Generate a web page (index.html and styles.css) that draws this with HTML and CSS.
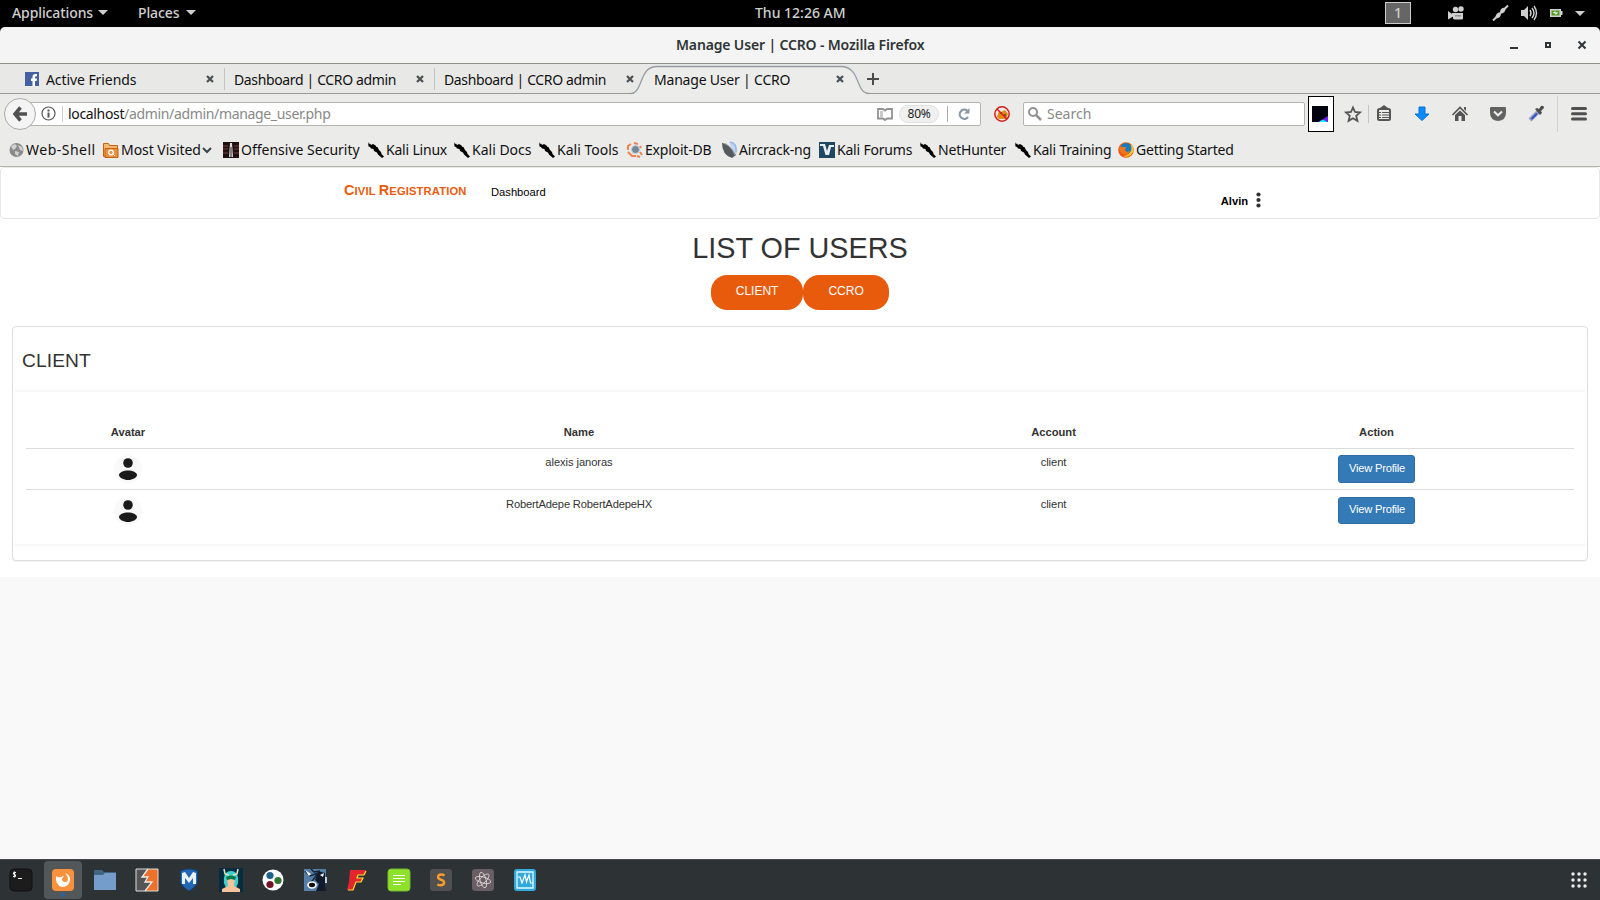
FILE: index.html
```html
<!DOCTYPE html>
<html lang="en">
<head>
<meta charset="utf-8">
<title>Manage User | CCRO</title>
<link rel="stylesheet" href="styles.css">
</head>
<body>
<svg class="defs" width="0" height="0">
  <symbol id="kali" viewBox="0 0 16 16"><path d="M0 0l1 2 1-.5 1 1.500 2-1 2.500 1.500 1 1.500L9.500 5l1.500 3 2 2 .5 2L16 14.500 14 16l-4-3.500-1-2L6 9l-.5-2-2.500-.5L2 5 .5 4.500z"/></symbol>
  <symbol id="caret" viewBox="0 0 10 5"><path d="M0 0h10L5 5z" fill="#d0d0d0"/></symbol>
  <symbol id="close" viewBox="0 0 8 8"><path d="M1 1l6 6M7 1L1 7" stroke="#4b5356" stroke-width="2.300"/></symbol>
  <symbol id="person" viewBox="0 0 28 28"><circle cx="14" cy="14" r="14" fill="#f9f9f9"/><circle cx="14" cy="8" r="4.800" fill="#1a1a1a"/><path d="M5 20c0-2.500 4.500-4.500 9-4.500s9 2 9 4.500-4.500 5-9 5-9-2.500-9-5z" fill="#1a1a1a"/></symbol>
</svg>
<header class="topbar">
  <span class="apps">Applications</span><svg width="10" height="5"><use href="#caret"/></svg>
  <span class="places">Places</span><svg width="10" height="5"><use href="#caret"/></svg>
  <span class="clock">Thu 12:26 AM</span>
  <span class="workspace">1</span>
  <svg class="tray" width="140" height="16" fill="#d0d0d0">
    <path d="M0 6l4 3v-1h11v5.500q0 1-1 1H6l-1-1v-2l-5 3z"/><circle cx="7.500" cy="4.500" r="2.700"/><circle cx="13" cy="4" r="2.700"/><path d="M7 10h6v1.500H7z" fill="#000" opacity=".3"/>
    <path d="M45 15.500l5-5M55 5.500l5-5" stroke="#d0d0d0" stroke-width="2"/><path d="M48 13c-1-3 1-5.500 4-5.500l1 1c0 3-2 5.500-5 4.500zM57 3c1 3-1 5.500-4 5.500l-1-1c0-3 2-5.500 5-4.500z"/>
    <path d="M73 5h3l4-4v14l-4-4h-3z"/><path d="M82 5q2 3 0 6M84 3q4 5 0 10M86 1q5 7 0 14" fill="none" stroke="#d0d0d0" stroke-width="1.400"/>
    <path d="M102 4h11v2h1.500v4H113v2h-11z"/><path d="M103.500 5.500h8v5h-8z" fill="#4f9a1e"/><path d="M104.500 8l3-2v1.500h3l-3 2.500V8.500z" fill="#fff"/>
    <path d="M127 6h10l-5 5z"/>
  </svg>
</header>
<div class="titlebar">
  <span class="window-title">Manage User | CCRO - Mozilla Firefox</span>
  <svg class="window-buttons" width="76" height="8"><path d="M0 6h8v2H0z" fill="#2e3436"/><path d="M36 2h4v4h-4z" fill="none" stroke="#2e3436" stroke-width="2"/><path d="M68.500 .5l7 7M75.500 .5l-7 7" stroke="#2e3436" stroke-width="2"/></svg>
</div>
<nav class="tabs">
  <div class="tab first"><svg width="14" height="14"><path d="M0 0h14v14H0z" fill="#4460a0"/><path d="M7.500 14V9H6V6.500h1.500V5q0-3 3-3H12v2.300h-1q-1 0-1 1v1.200h2L11.700 9H10v5z" fill="#fff"/></svg><span>Active Friends</span><svg class="x" width="8" height="8"><use href="#close"/></svg></div>
  <div class="tab"><span>Dashboard | CCRO admin</span><svg class="x" width="8" height="8"><use href="#close"/></svg></div>
  <div class="tab"><span>Dashboard | CCRO admin</span><svg class="x" width="8" height="8"><use href="#close"/></svg></div>
  <div class="tab active"><svg class="shape" width="240" height="31"><path d="M0 29.500C14 29.500 10 2.500 27 2.500H213C232 2.500 226 29.500 240 29.500V31H0z" fill="#ececeb"/><path d="M0 28.500C14 28.500 8 1.500 27 1.500H211C231 1.500 225 28.500 239 28.500" fill="none" stroke="#989da3" stroke-width="1.300"/></svg><span>Manage User | CCRO</span><svg class="x" width="8" height="8"><use href="#close"/></svg></div>
  <svg class="plus" width="12" height="12"><path d="M6 0v12M0 6h12" stroke="#4b4b4b" stroke-width="2"/></svg>
</nav>
<div class="navigation">
  <div class="back"><svg width="14" height="14"><path d="M7.500 0.500L2 7l5.500 6.500M2 7h12" fill="none" stroke="#505050" stroke-width="3.500"/></svg></div>
  <div class="urlbar">
    <svg width="15" height="15"><circle cx="7.500" cy="7.500" r="6.500" fill="none" stroke="#555" stroke-width="1.200"/><path d="M6.500 3.500h2v2h-2zM6.500 6.500h2v5h-2z" fill="#555"/></svg>
    <i class="rule"></i><span class="address"><b>localhost</b>/admin/admin/manage_user.php</span>
    <svg class="reader" width="16" height="12" fill="none" stroke="#929292" stroke-width="1.800"><path d="M1 1h5l2 1.500L10 1h5v9.500h-5L8 12l-2-1.500H1z"/><path d="M3 4h3M3 6h3M3 8h3" stroke-width="1"/></svg>
    <span class="zoom">80%</span><i class="rule dark"></i>
    <svg class="reload" width="12" height="12"><path d="M10 9A4.600 4.600 0 1 1 9 2.500" fill="none" stroke="#8797a6" stroke-width="2.200"/><path d="M11.500 0v5.500H6z" fill="#8797a6"/></svg>
  </div>
  <svg class="blocked" width="16" height="16"><circle cx="8" cy="8" r="7.200" fill="#eee8e4" stroke="#d2201c" stroke-width="1.500"/><path d="M3 11l2-6 2 1 4-2 3 4-2 5H5z" fill="#e68a13"/><path d="M6 7h2M10 9h2" stroke="#653b15" stroke-width="1.500"/><path d="M3 3l10 10" stroke="#d2201c" stroke-width="1.500"/></svg>
  <div class="search"><svg width="14" height="14" fill="none" stroke="#929292"><circle cx="5" cy="5" r="4" stroke-width="2"/><path d="M8 8l5 5" stroke-width="2.500"/></svg><span>Search</span></div>
  <div class="addon"><svg width="16" height="16"><path d="M0 0h16v16H0z" fill="#03020f"/><path d="M6 16l10-6v6z" fill="#6d21f0"/><path d="M7 16q4-4 8 0z" fill="#0ff"/></svg></div>
  <svg class="tools" width="244" height="36">
    <path d="M9 11.500l2 4.500 5 .5-3.800 3.300 1.200 5-4.400-2.600-4.400 2.600 1.200-5L2 16.500l5-.5z" fill="none" stroke="#555" stroke-width="1.800"/>
    <path d="M24.500 9v18" stroke="#c5c5c5"/>
    <rect x="34" y="13" width="12" height="11" rx="1.500" fill="none" stroke="#555" stroke-width="2"/><path d="M36 12l4-3 4 3z" fill="#555"/><path d="M35 16.500h2M38 16.500h7M35 19h2M38 19h7M35 21.500h2M38 21.500h7" stroke="#555" stroke-width="1.200"/>
    <path d="M75 11h6v7h4l-7 6.500-7-6.500h4z" fill="#0c8bfa" stroke="#0870d0"/>
    <path d="M108.500 19l7.500-7.500 7.500 7.500" fill="none" stroke="#555" stroke-width="1.700"/><path d="M111 19l5-4.500 5 4.500v6h-3.500v-5h-3v5H111zM120 11h2v4l-2-2z" fill="#555"/>
    <path d="M146 12q0-1 1-1h14q1 0 1 1v5q0 7-8 8-8-1-8-8z" fill="#626262"/><path d="M150 15.500l4 3.800 4-3.800" fill="none" stroke="#eee" stroke-width="2"/>
    <path d="M186 24l8-8" stroke="#96a0bd" stroke-width="4"/><path d="M187.500 23l5.500-5.500" stroke="#3254cc" stroke-width="2"/><path d="M191 13l2-1 2 1 2-3q3-1 3 2l-3 3 1 2-2 2z" fill="#4d4d50"/>
    <path d="M213.500 0v36" stroke="#d2d2d2"/><path d="M228.500 12.500h13M228.500 17.700h13M228.500 23h13" stroke="#505050" stroke-width="3" stroke-linecap="round"/>
  </svg>
</div>
<div class="bookmarks">
  <a><svg width="15" height="16"><circle cx="7.500" cy="8" r="7" fill="#8b8b8b"/><path d="M2 4l4-2 2 2-2 3-2 1zM9 3l4 2 1 4-3-1zM6 9l4 1-1 4-3-2z" fill="#d2d2d2"/></svg>Web-Shell</a>
  <a><svg width="16" height="16"><path d="M.5 1.500h5l1 2h8v11H.5z" fill="#f3b673" stroke="#c7620d"/><path d="M2 6.500h13v9H2z" fill="#e99043" stroke="#c7620d"/><circle cx="8" cy="10.500" r="2.300" fill="none" stroke="#fff" stroke-width="1.300"/><path d="M10 12l2 2" stroke="#fff"/></svg>Most Visited<svg class="chevron" width="10" height="7"><path d="M0 1l4 4 4-4" fill="none" stroke="#3c4448" stroke-width="2"/></svg></a>
  <a><svg width="16" height="16"><path d="M0 0h16v16H0z" fill="#20100f"/><path d="M0 4h5M11 4h5M0 7h5M11 7h5M0 11h5M11 11h5" stroke="#703f3b"/><path d="M7 1h2l1 14H6z" fill="#ddd"/><path d="M8 5v10" stroke="#222"/></svg>Offensive Security</a>
  <a><svg width="16" height="16"><use href="#kali"/></svg>Kali Linux</a>
  <a><svg width="16" height="16"><use href="#kali"/></svg>Kali Docs</a>
  <a><svg width="16" height="16"><use href="#kali"/></svg>Kali Tools</a>
  <a><svg width="16" height="16"><path d="M1 8L1 4l3-2M7 1l4 1M1 10l4 4h4M13 4l1 2M13 10l2 3M10 14l3 1" fill="none" stroke="#ec824d" stroke-width="2"/><circle cx="8.500" cy="7.500" r="4" fill="#728999" stroke="#c7d0d5"/></svg>Exploit-DB</a>
  <a><svg width="15" height="16"><path d="M7 0q8 1 8 11l-3 2z" fill="#c3d5f3"/><path d="M0 1q6-1 14 12l-4 3Q0 13 0 1z" fill="#555b5c"/><path d="M1 1q8 2 12 12" fill="none" stroke="#aaa"/><path d="M8 0q7 1 6 10" fill="none" stroke="#9ab7e9" stroke-width="1.500"/></svg>Aircrack-ng</a>
  <a><svg width="16" height="16"><path d="M0 0h16v16H0z" fill="#20475f"/><path d="M1 2h5l2 7 2-6h5v2h-3l-2 8H6.500L4 4H1z" fill="#e8eff2"/></svg>Kali Forums</a>
  <a><svg width="16" height="16"><use href="#kali"/></svg>NetHunter</a>
  <a><svg width="16" height="16"><use href="#kali"/></svg>Kali Training</a>
  <a><svg width="16" height="16"><circle cx="8" cy="8" r="7.800" fill="#ea5a12"/><path d="M13 2q5 6 0 11-4 3-8 1 8 0 8-12z" fill="#ffc329"/><circle cx="8" cy="6.500" r="5.500" fill="#167cbd"/><path d="M1 4l3 1 4 0-1 3 2 2 3-1q-2 5-7 3Q1 10 1 4z" fill="#ee751b"/></svg>Getting Started</a>
</div>
<main class="page">
  <div class="site-nav"><a class="brand"><span>C</span>ivil <span>R</span>egistration</a><a class="dashboard">Dashboard</a><span class="user">Alvin<svg width="5" height="16" fill="#333"><circle cx="2.500" cy="1.500" r="2.100"/><circle cx="2.500" cy="7" r="2.100"/><circle cx="2.500" cy="12.500" r="2.100"/></svg></span></div>
  <h1>LIST OF USERS</h1>
  <div class="switch"><a>CLIENT</a><a>CCRO</a></div>
  <section class="panel">
    <h2>CLIENT</h2>
    <div class="panel-body">
      <table>
        <colgroup><col class="c-avatar"><col class="c-name"><col class="c-account"><col></colgroup>
        <thead><tr><th>Avatar</th><th>Name</th><th>Account</th><th>Action</th></tr></thead>
        <tbody>
          <tr><td><svg width="28" height="28"><use href="#person"/></svg></td><td>alexis janoras</td><td>client</td><td><a class="view">View Profile</a></td></tr>
          <tr><td><svg width="28" height="28"><use href="#person"/></svg></td><td class="tight">RobertAdepe RobertAdepeHX</td><td>client</td><td><a class="view">View Profile</a></td></tr>
        </tbody>
      </table>
    </div>
  </section>
</main>
<footer class="dock">
  <span><svg viewBox="0 0 24 24"><rect x="1" y="1" width="22" height="22" rx="4" fill="#1c1c1c" stroke="#111"/><path d="M7 4.500H5q-1 1 0 1.700l1 .5q1 1 0 1.800H4M5.500 3.500v6M9 10.500h4" fill="none" stroke="#eee" stroke-width="1.200"/></svg></span>
  <span class="running"><svg viewBox="0 0 24 24"><rect x="1" y="1" width="22" height="22" rx="4" fill="#fa913c"/><path d="M5 8q2 2 5 1l3-1-2 3q0 3 3 3t3-3q0-3-3-6 6 2 5 8-2 6-8 6-7-2-6-11z" fill="#fff"/></svg></span>
  <span><svg viewBox="0 0 24 24"><path d="M1 2h8l2 2h12v5H1z" fill="#416681"/><path d="M1 7h9l2-2h11v17H1z" fill="#749dcb"/></svg></span>
  <span><svg viewBox="0 0 24 24"><path d="M1 1h22v22H1z" fill="#555"/><path d="M12 1h11v22H10l7-9h-7l4-5H7z" fill="#ee702b"/><path d="M13 1L7 9h6l-3 5h7l-7 9" fill="none" stroke="#eee" stroke-width="1.300"/><path d="M1 1h22v22H1z" fill="none" stroke="#ddd"/></svg></span>
  <span><svg viewBox="0 0 24 24"><path d="M3.500 3q8.500-4 17 0v12q-3 5-8.500 8-5.500-3-8.500-8z" fill="#2366b6" stroke="#164273"/><path d="M5 16V5l3-1 4 6 4-6 3 1v11h-3v-6l-4 5-4-5v6z" fill="#e9f1fb"/></svg></span>
  <span><svg viewBox="0 0 24 24"><path d="M0 0h24v24H0z" fill="#062c42"/><path d="M5 15q-1-12 7-12t7 12l-2 5H7z" fill="#3fd0cc"/><path d="M8 10h8l-1 8 6 3v3H3v-3l6-3z" fill="#f5c29c"/><path d="M7 9q5-3 10 0l-1 3-4-1-4 1z" fill="#08774c"/><path d="M5 1l1 5 4 1M19 1l-1 5-4 1" fill="none" stroke="#e7e4b2" stroke-width="1.500"/></svg></span>
  <span><svg viewBox="0 0 24 24"><circle cx="12" cy="12" r="10.500" fill="#fff"/><circle cx="9" cy="7.500" r="3.600" fill="#1e6488"/><circle cx="17" cy="12.500" r="3.600" fill="#2f7532"/><circle cx="9" cy="16.500" r="3.600" fill="#701426"/></svg></span>
  <span><svg viewBox="0 0 24 24"><path d="M1 1h22v22H1z" fill="#537fa8"/><path d="M15 3l7 2 1 18H13l3-7-4-4 2-5z" fill="#101a2a"/><path d="M2 3l5 5 8-3-5 7-5 5M8 1l3 3 6-1" fill="none" stroke="#172334" stroke-width="1.500"/><ellipse cx="9" cy="17" rx="4" ry="3" fill="#111" stroke="#fff" stroke-width="1.700"/><path d="M17 7l4-2-1 4zM2 2l6 4-2 2z" fill="#fff"/><path d="M23 9v6" stroke="#fff" stroke-width="1.500"/></svg></span>
  <span><svg viewBox="0 0 24 24"><path d="M5 2h16l-2 5h-6l-1 3h6l-2 4h-5l-3 8H2l2-8z" fill="#e3262b"/><path d="M21 3l-2 4h-6l-1 3h6l-2 4h-5l-3 8H3" fill="none" stroke="#ffe22e" stroke-width="1.200"/></svg></span>
  <span><svg viewBox="0 0 24 24"><rect x="1" y="1" width="22" height="22" rx="3" fill="#8fe22a" stroke="#76b733"/><path d="M6 7.500h12M6 10.500h12M6 13.500h12M6 16.500h8" stroke="#fff" stroke-width="1.200"/></svg></span>
  <span><svg viewBox="0 0 24 24"><rect x="1" y="1" width="22" height="22" rx="3" fill="#505050"/><path d="M15.500 7.500Q12 5.500 9.500 7.500q-1.500 3 2.500 4.300 4.500 1.500 2.500 4.500-2.500 2-6.200.2" fill="none" stroke="#fa9d2b" stroke-width="2.500"/></svg></span>
  <span><svg viewBox="0 0 24 24"><rect x="1" y="1" width="22" height="22" rx="3" fill="#685e63"/><g fill="none" stroke="#ddd0d0" stroke-width=".9"><ellipse cx="12" cy="12" rx="8" ry="3" transform="rotate(15 12 12)"/><ellipse cx="12" cy="12" rx="8" ry="3" transform="rotate(75 12 12)"/><ellipse cx="12" cy="12" rx="8" ry="3" transform="rotate(135 12 12)"/></g></svg></span>
  <span><svg viewBox="0 0 24 24"><rect x="1" y="1" width="22" height="22" rx="3" fill="#30a9dd"/><path d="M4 4h16v16H4z" fill="none" stroke="#e7f8ff" stroke-width="1.300"/><path d="M5 9h2l2 6 3-8 1.500 7 2.500-7 1.500 8H20" fill="none" stroke="#fff" stroke-width="1.200"/></svg></span>
  <svg class="grid" width="16" height="16" fill="#eee"><g id="dots"><circle cx="2" cy="2" r="1.700"/><circle cx="8" cy="2" r="1.700"/><circle cx="14" cy="2" r="1.700"/></g><use href="#dots" y="6"/><use href="#dots" y="12"/></svg>
</footer>
</body>
</html>
```
FILE: styles.css
```css
* { box-sizing: border-box; }
body { margin: 0; width: 1600px; height: 900px; overflow: hidden; display: flex; flex-direction: column; background: #000; font: 14px/20px "Noto Sans", sans-serif; color: #111; }
svg { display: block; flex: none; overflow: visible; }
.defs { position: absolute; }
span, a { white-space: nowrap; }
.topbar { height: 27px; flex: none; display: grid; grid-template-columns: 86px 40px 48px 569px 630px 63px 1fr; align-items: center; padding: 0 0 2px 12px; color: #d0d0d0; font-weight: 500; letter-spacing: -0.1px; }
.clock { letter-spacing: 0; }
.workspace { width: 26px; height: 22px; border: 1px solid #ccc; background: #666; text-align: center; }
.titlebar { height: 37px; flex: none; display: grid; grid-template-columns: 676px 1fr 90px; align-items: center; background: #f4f4f4; border-bottom: 1px solid #8f8f8a; border-radius: 5px 5px 0 0; color: #2e3436; }
.window-title { grid-column: 2; font-weight: 600; letter-spacing: -0.15px; }
.tabs { height: 30px; flex: none; display: flex; align-items: center; background: #e8e8e7; border-bottom: 1px solid #999; padding-left: 15px; }
.tab { width: 210px; height: 22px; display: flex; align-items: center; padding: 0 10px 0 9px; border-right: 1px solid #c3c3c1; letter-spacing: -0.36px; position: relative; }
.tab.first { gap: 7px; padding-left: 10px; letter-spacing: -0.08px; }
.tab .x { margin-left: auto; }
.tab:nth-child(3), .tab.active { border-color: transparent; }
.tab.active { letter-spacing: -0.2px; }
.tab span { position: relative; padding-top: 2px; }
.tab .shape { position: absolute; left: -15px; top: -3px; }
.tab.active .x { position: relative; }
.plus { margin-left: 12px; }
.navigation { height: 39px; flex: none; display: flex; align-items: center; background: #ebebea; }
.back { width: 32px; height: 32px; margin-left: 4px; border: 1px solid #aaa; border-radius: 50%; background: #f4f4f4; display: grid; place-items: center; z-index: 1; }
.urlbar { width: 951px; height: 24px; margin-left: -6px; padding: 0 10px; display: flex; align-items: center; background: #fff; border: 1px solid #b5b5b0; border-radius: 0 2px 2px 0; color: #888; }
.rule { width: 1px; height: 16px; margin: 0 5px 0 6px; background: #ccc; }
.rule.dark { margin: 0 10px 0 8px; background: #aaa; }
.address b { font-weight: 400; color: #111; }
.address { letter-spacing: -0.34px; }
.reader { margin-left: auto; }
.zoom { width: 40px; height: 18px; margin-left: 6px; border: 1px solid #e0e0e0; border-radius: 9px; background: #f0f0f0; color: #222; font-size: 12px; line-height: 16px; letter-spacing: -0.3px; text-align: center; }
.blocked { margin: 0 13px; }
.search { width: 282px; height: 24px; display: flex; align-items: center; gap: 5px; padding-left: 4px; background: #fff; border: 1px solid #b5b5b0; border-radius: 2px; color: #888; }
.addon { width: 26px; height: 36px; margin: 0 10px 0 3px; padding-right: 2px; border: 1px solid #000; background: #fff; display: grid; place-items: center; }
.bookmarks { height: 34px; flex: none; display: grid; grid-template-columns: 94px 120px 145px 86px 85px 88px 95px 97px 101px 95px 103px 1fr; align-items: center; padding: 1px 0 0 9px; background: #ebebea; border-bottom: 1px solid #b5b5aa; letter-spacing: -0.2px; }
.bookmarks a { display: flex; align-items: center; gap: 2px; }
.bookmarks a:nth-child(1) { letter-spacing: 0.5px; }
.bookmarks a:nth-child(2) { letter-spacing: -0.05px; }
.bookmarks a:nth-child(3) { letter-spacing: 0; }
.bookmarks a:nth-child(5), .bookmarks a:nth-child(6) { letter-spacing: 0; }
.page { height: 692px; flex: none; background: linear-gradient(#fff 410px, #f9f9f9 410px); font: 11.2px/16px "Liberation Sans", Arial, sans-serif; color: #333; }
.site-nav { height: 52px; display: flex; align-items: flex-start; padding-left: 343px; border: 1px solid #e7e7e7; border-radius: 4px; color: #000; }
.brand { width: 147px; padding-top: 14px; font-size: 11.2px; font-weight: 700; letter-spacing: 0.15px; text-transform: uppercase; color: #e95b0c; }
.brand span { font-size: 14.4px; }
.dashboard { padding-top: 16px; }
.user { display: flex; align-items: center; gap: 8px; margin: 25px 0 0 675px; font-weight: 700; }
h1 { margin: 12px 0 0; font-size: 28.8px; line-height: 34px; font-weight: 400; text-align: center; }
.switch { display: flex; justify-content: center; margin-top: 10px; }
.switch a { height: 35px; padding: 8px 25px; border-radius: 16px; background: #e95b0c; color: #fff; font-size: 12px; }
.switch a + a { padding-right: 25.5px; }
.panel { width: 1576px; height: 235px; margin: 16px 12px 0; border: 1px solid #ddd; border-radius: 4px; background: #fff; box-shadow: 0 1px 1px rgba(0,0,0,.05); }
h2 { height: 63px; margin: 0 1px; padding: 22px 0 0 8px; font-size: 19.2px; line-height: 24px; font-weight: 400; letter-spacing: 0.1px; border-radius: 3px; box-shadow: 0 2px 1px #f7f7f7; }
.panel-body { height: 154px; margin: 0 1px; padding: 30px 12px 0; border-radius: 3px; box-shadow: 0 2px 1px #f7f7f7; }
table { width: 1548px; border-collapse: collapse; table-layout: fixed; text-align: center; }
.c-avatar { width: 204px; }
.c-name { width: 698px; }
.c-account { width: 251px; }
th { height: 28px; padding: 4px 0 0; vertical-align: top; }
td { height: 41px; padding: 6px 0 0; vertical-align: top; border-top: 1px solid #ddd; line-height: 14px; letter-spacing: -0.08px; }
.tight { letter-spacing: -0.18px; }
tr + tr td { height: 42px; padding-top: 7px; }
td svg { margin: 0 auto; }
.view { display: block; width: 77px; height: 28px; margin: 0 auto; padding-left: 1px; border: 1px solid #2e6da4; border-radius: 3px; background: #337ab7; color: #fff; line-height: 25px; letter-spacing: -0.25px; }
tr + tr .view { height: 27px; line-height: 23px; }
.dock { height: 41px; flex: none; display: flex; align-items: center; padding: 0 13px 0 0; background: #2d3235; border-top: 1px solid #45494b; }
.dock > span { width: 38px; height: 38px; margin: 0 2px; display: grid; place-items: center; border-radius: 4px; position: relative; }
.dock > span svg { width: 24px; height: 24px; margin-bottom: 1px; }
.running { background: #525759; }
.running::after { content: ""; position: absolute; bottom: 2px; width: 4px; height: 4px; border-radius: 50%; background: #2763a7; }
.grid { margin-left: auto; }
```
